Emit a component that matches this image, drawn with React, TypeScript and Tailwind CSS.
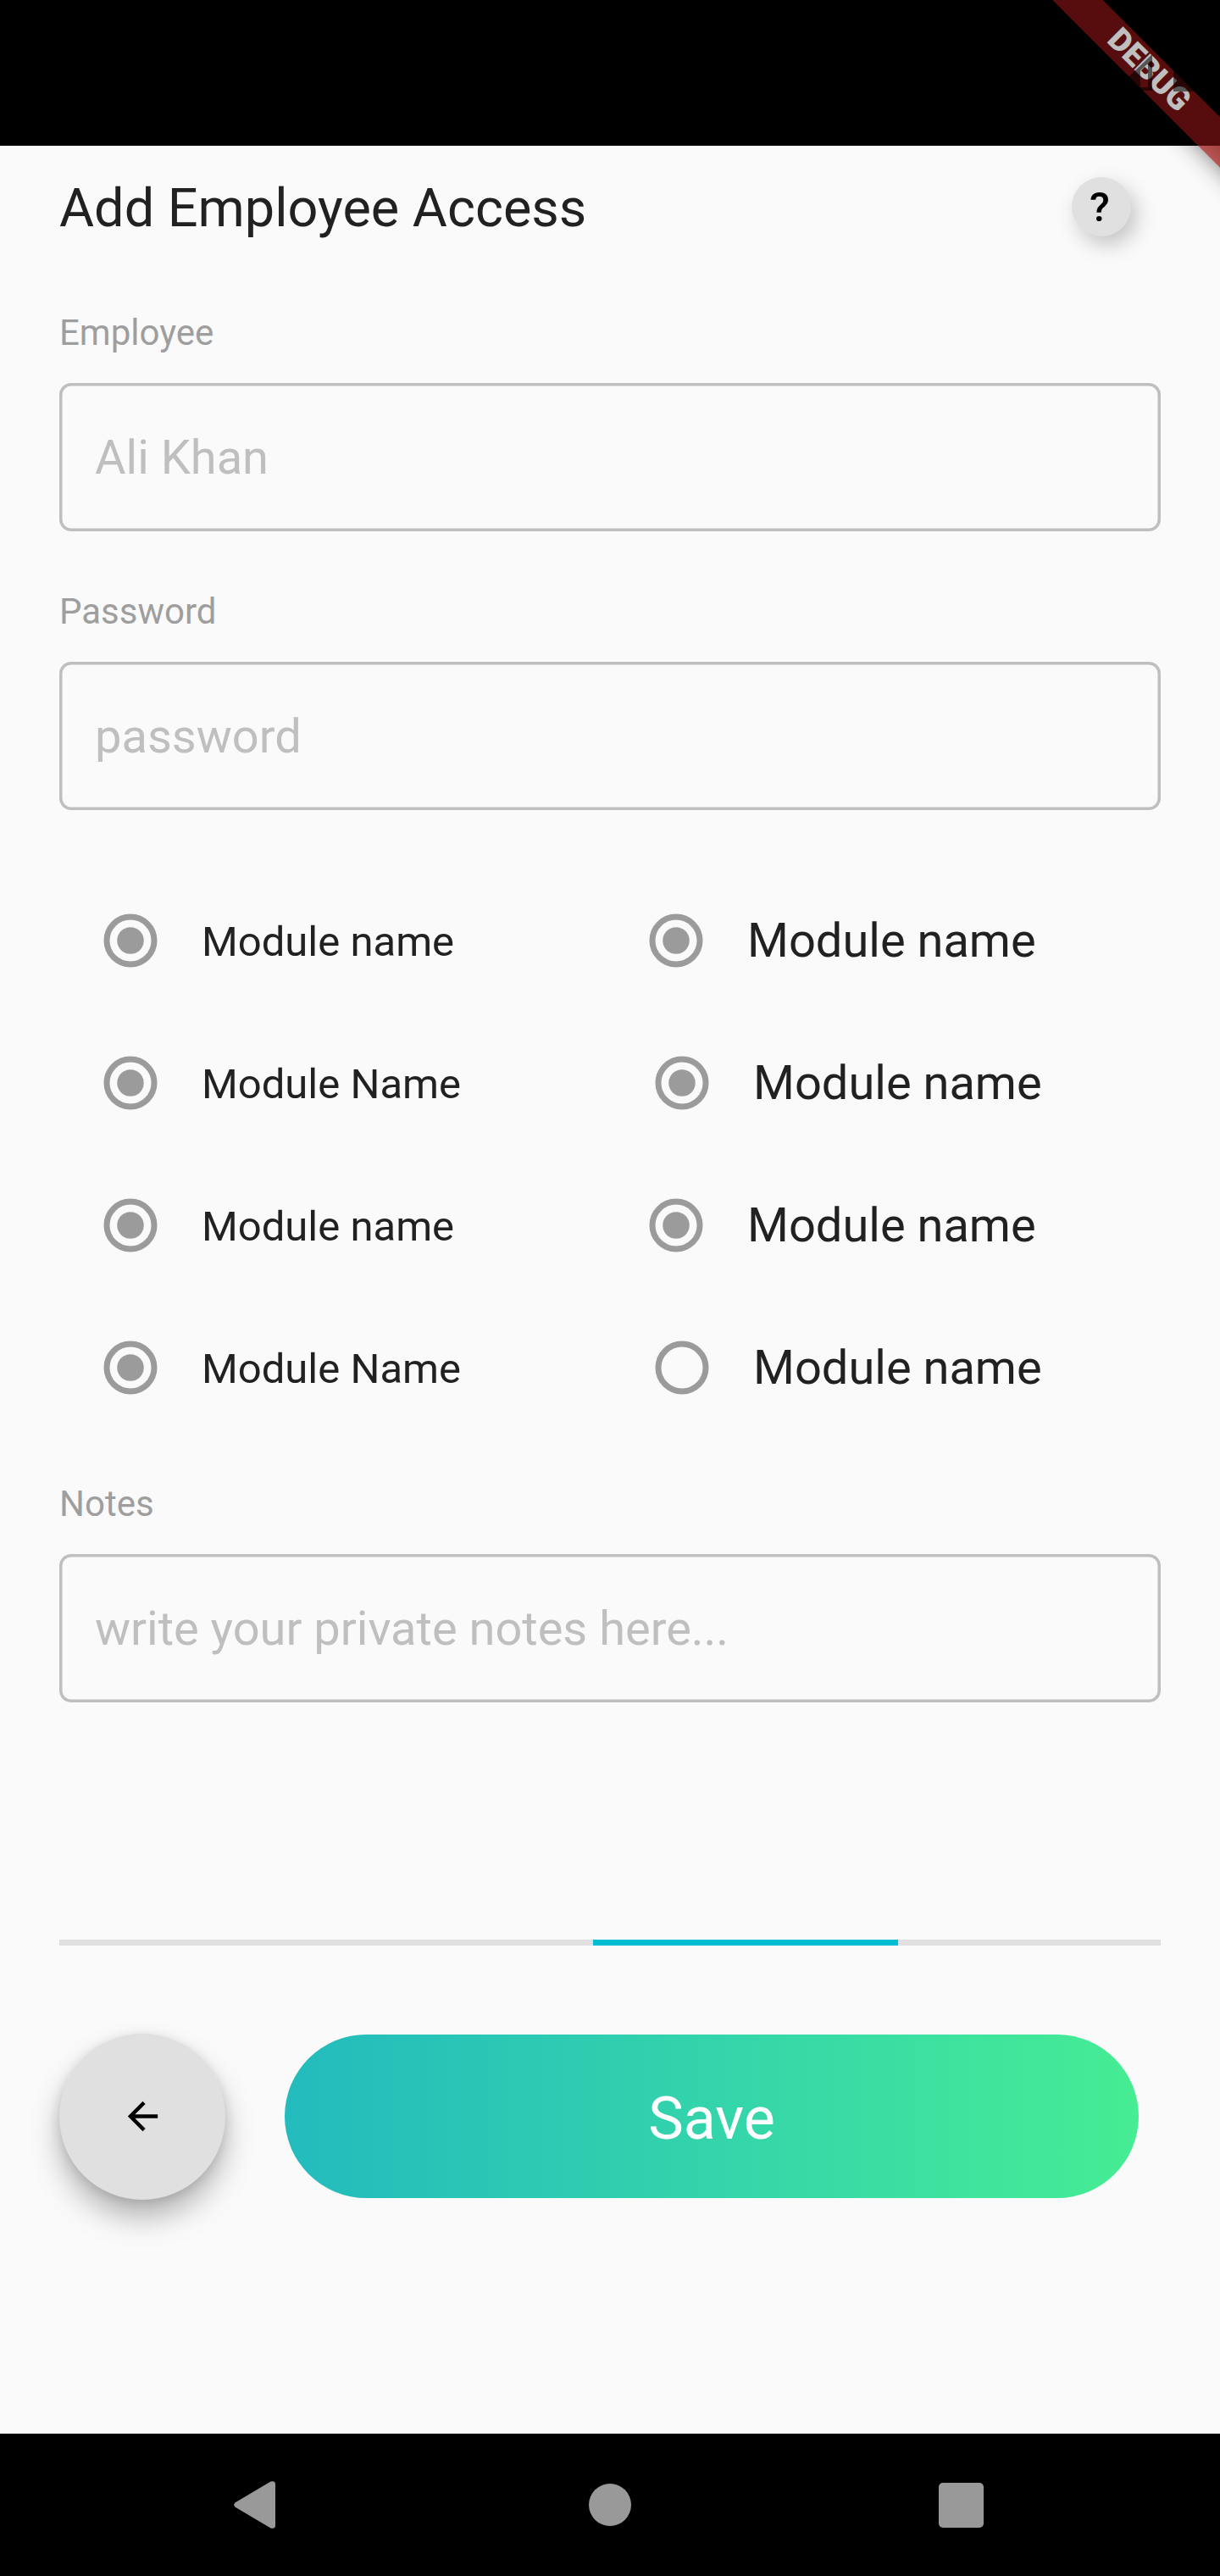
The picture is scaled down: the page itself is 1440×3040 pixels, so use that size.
const ROBOTO = "font-['Roboto',sans-serif]";

function Field({ label, placeholder }: { label: string; placeholder: string }) {
  return (
    <div className="flex flex-col">
      <label className="h-[50px] text-[42px] leading-[50px] text-[#9e9e9e]">{label}</label>
      <div className="mt-[34px] flex h-[175px] items-center rounded-[14px] pl-[42px] shadow-[inset_0_0_0_3.5px_#bfbfbf]">
        <span className="text-[56px] leading-[66px] text-[#bfbfbf]">{placeholder}</span>
      </div>
    </div>
  );
}

function Radio({ checked }: { checked: boolean }) {
  return (
    <svg width="64" height="64" viewBox="0 0 64 64" className="shrink-0">
      <circle cx="32" cy="32" r="28" fill="none" stroke="#9b9b9b" strokeWidth="7" />
      {checked && <circle cx="32" cy="32" r="15.75" fill="#9b9b9b" />}
    </svg>
  );
}

const rows = [
  { left: "Module name", right: "Module name", checked: true, shifted: false },
  { left: "Module Name", right: "Module name", checked: true, shifted: true },
  { left: "Module name", right: "Module name", checked: true, shifted: false },
  { left: "Module Name", right: "Module name", checked: false, shifted: true },
];

export default function App() {
  return (
    <div className={`relative flex h-[3040px] w-[1440px] flex-col overflow-hidden bg-[#fafafa] text-[#212121] ${ROBOTO}`}>
      <div className="h-[172px] shrink-0 bg-black" />

      <header className="flex h-[144px] shrink-0 items-center justify-between pl-[70px] pr-[105px]">
        <h1 className="pt-[3px] text-[63px] leading-[74px]">Add Employee Access</h1>
        <button className="flex h-[70px] w-[70px] items-center justify-center rounded-full bg-[#e0e0e0] pr-[4px] text-[49px] font-medium leading-none text-black shadow-[7px_10px_24px_rgba(0,0,0,0.22)]">
          ?
        </button>
      </header>

      <main className="flex flex-col px-[70px] pt-[52px]">
        <Field label="Employee" placeholder="Ali Khan" />
        <div className="h-[70px]" />
        <Field label="Password" placeholder="password" />

        <div className="mt-[70px] flex flex-col">
          {rows.map((r, i) => (
            <div key={i} className="flex h-[168px] items-center pl-[52px]">
              <div className="flex w-[644px] items-center gap-[52px]">
                <Radio checked />
                <span className="pt-[3px] text-[49px] leading-[58px]">{r.left}</span>
              </div>
              <div className={r.shifted ? "flex items-center gap-[52px] pl-[7px]" : "flex items-center gap-[52px]"}>
                <Radio checked={r.checked} />
                <span className="text-[56px] leading-[66px]">{r.right}</span>
              </div>
            </div>
          ))}
        </div>

        <div className="mt-[52px]">
          <Field label="Notes" placeholder="write your private notes here..." />
        </div>

        <div className="mt-[280px] flex h-[7px] bg-[#e0e0e0] pl-[630px]">
          <div className="w-[360px] bg-[#00bcd4]" />
        </div>

        <div className="mt-[103.5px] flex items-center gap-[70px]">
          <button className="flex h-[196px] w-[196px] items-center justify-center rounded-full bg-[#e0e0e0] shadow-[0_21px_35px_rgba(0,0,0,0.28),0_3px_14px_rgba(0,0,0,0.12)]">
            <svg width="53" height="53" viewBox="0 0 24 24" fill="#000">
              <path d="M20 11H7.83l5.59-5.59L12 4l-8 8 8 8 1.41-1.41L7.83 13H20v-2z" />
            </svg>
          </button>
          <button className="flex h-[192.5px] w-[1008px] items-center justify-center rounded-full bg-linear-to-r from-[#23bbbd] to-[#46ed93] pt-[5px] text-[70px] leading-[82px] text-white">
            Save
          </button>
        </div>
      </main>

      <nav className="mt-auto flex h-[168px] shrink-0 items-center bg-black">
        <svg width="50" height="58" viewBox="0 0 50 58" className="ml-[276px]">
          <path d="M43.500 1.500 1.800 26.200Q-1.500 29 1.800 31.800L43.500 56.500Q49 58 49 53V5Q49 0 43.500 1.500Z" fill="#999" />
        </svg>
        <div className="ml-[369px] h-[50px] w-[50px] rounded-full bg-[#999]" />
        <div className="ml-[363px] h-[53px] w-[53px] rounded-[5px] bg-[#999]" />
      </nav>

      {/* Debug ribbon with the status bar scrim and icons above it */}
      <div className="absolute right-0 top-0 h-[400px] w-[400px] overflow-hidden">
        <div className="absolute left-[14px] top-[61px] h-[42px] w-[600px] rotate-45 bg-black/50 blur-[14px]" />
        <div className="absolute left-[14px] top-[61px] flex h-[42px] w-[600px] rotate-45 items-center justify-center bg-[#b71c1c]/63 pl-[4px] text-[37.5px] font-black leading-none text-white">
          <span className="-translate-y-[1px]">DEBUG</span>
        </div>
        <div className="absolute left-0 top-0 h-[172px] w-full bg-black/25" />
        <svg className="absolute left-[270px] top-[60px]" width="110" height="50" viewBox="0 0 110 50">
          <path fillRule="evenodd" fill="#000" fillOpacity=".55" d="M5 47 50 4V47ZM36 23V43H45V15Z" />
          <path fill="#000" fillOpacity=".55" d="M75 22H104V48H75Z" />
        </svg>
      </div>
    </div>
  );
}
